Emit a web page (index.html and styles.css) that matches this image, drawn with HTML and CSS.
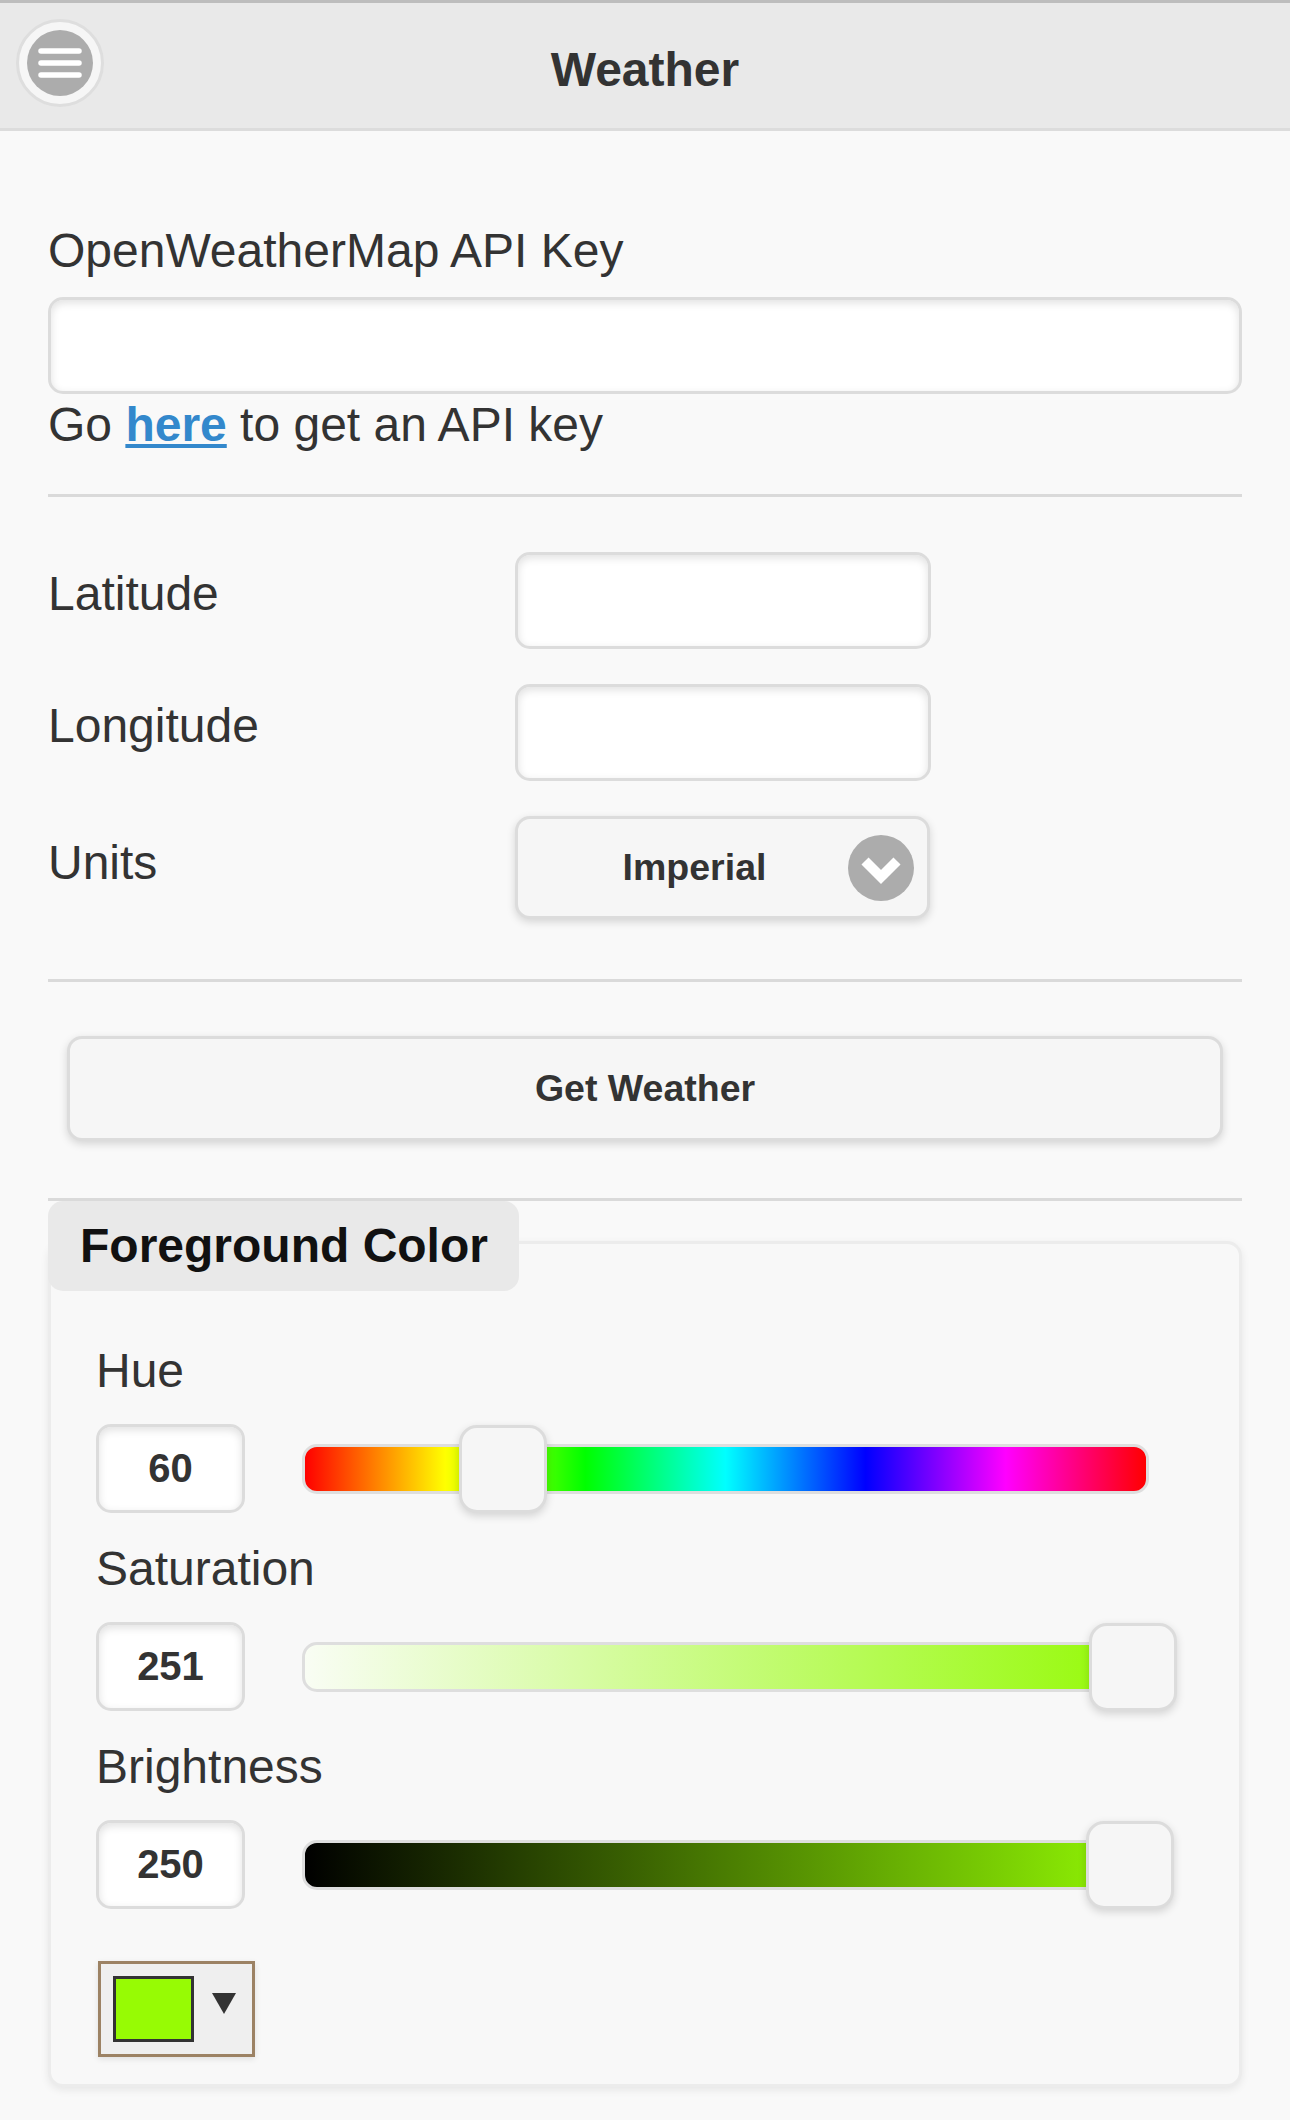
FILE: index.html
```html
<!DOCTYPE html>
<html lang="en">
<head>
<meta charset="utf-8">
<title>Weather</title>
<link rel="stylesheet" href="styles.css">
</head>
<body>
<header class="hdr">
  <div class="hdr-left">
    <button class="menu-btn" aria-label="Menu">
      <svg width="66" height="66" viewBox="0 0 66 66">
        <circle cx="33" cy="33" r="33" fill="#acacac"/>
        <g stroke="#fff" stroke-width="5.5" stroke-linecap="round">
          <line x1="14" y1="21" x2="52" y2="21"/>
          <line x1="14" y1="33" x2="52" y2="33"/>
          <line x1="14" y1="45" x2="52" y2="45"/>
        </g>
      </svg>
    </button>
  </div>
  <h1 class="title">Weather</h1>
  <div class="hdr-right"></div>
</header>

<main class="content">
  <section class="field api">
    <label class="lbl">OpenWeatherMap API Key</label>
    <div class="text-input"></div>
    <p class="hint">Go <a href="#">here</a> to get an API key</p>
  </section>

  <section class="field loc">
    <div class="row">
      <label class="lbl">Latitude</label>
      <div class="text-input half"></div>
    </div>
    <div class="row">
      <label class="lbl">Longitude</label>
      <div class="text-input half"></div>
    </div>
    <div class="row units">
      <label class="lbl">Units</label>
      <div class="select">
        <span class="select-text">Imperial</span>
        <svg class="select-icon" width="66" height="66" viewBox="0 0 66 66">
          <circle cx="33" cy="33" r="33" fill="#acacac"/>
          <polyline points="17,26 33,42 49,26" fill="none" stroke="#fff" stroke-width="10" stroke-linejoin="miter"/>
        </svg>
      </div>
    </div>
  </section>

  <section class="field action">
    <button class="btn">Get Weather</button>
  </section>

  <div class="colorbox">
    <div class="legend">Foreground Color</div>

    <label class="lbl slbl first">Hue</label>
    <div class="srow">
      <div class="val">60</div>
      <div class="track hue"><div class="thumb" style="left: calc(23.53% - 44px)"></div></div>
    </div>

    <label class="lbl slbl">Saturation</label>
    <div class="srow">
      <div class="val">251</div>
      <div class="track sat"><div class="thumb" style="left: calc(98.43% - 44px)"></div></div>
    </div>

    <label class="lbl slbl">Brightness</label>
    <div class="srow">
      <div class="val">250</div>
      <div class="track bri"><div class="thumb" style="left: calc(98.04% - 44px)"></div></div>
    </div>

    <div class="swatch-btn">
      <span class="swatch"></span>
      <span class="caret"></span>
    </div>
  </div>
</main>
</body>
</html>
```

FILE: styles.css
```css
* { box-sizing: border-box; }

html, body {
  margin: 0;
  padding: 0;
}

body {
  background: #f9f9f9;
  font-family: "Liberation Sans", Arial, Helvetica, sans-serif;
  color: #333;
  width: 1290px;
}

/* Header */
.hdr {
  height: 131px;
  border-top: 3px solid #bdbdbd;
  border-bottom: 3px solid #dcdcdc;
  background: #e9e9e9;
  display: grid;
  grid-template-columns: 130px 1fr 130px;
}

.hdr-left {
  padding: 16px 0 0 16px;
}

.menu-btn {
  width: 88px;
  height: 88px;
  border-radius: 50%;
  background: #f6f6f6;
  border: 3px solid #dedede;
  padding: 0;
  display: flex;
  align-items: center;
  justify-content: center;
}

.menu-btn svg { display: block; }

.title {
  margin: 0;
  align-self: center;
  text-align: center;
  font-size: 48px;
  font-weight: 700;
  line-height: 62px;
  padding-top: 8px;
  color: #333;
}

/* Content */
.content {
  padding: 0 48px 30px;
}

.field {
  border-bottom: 3px solid #dadada;
}

.lbl {
  display: block;
  font-size: 48px;
  line-height: 62px;
  color: #333;
}

.text-input {
  display: block;
  height: 97px;
  background: #fff;
  border: 3px solid #dcdcdc;
  border-radius: 15px;
  box-shadow: inset 0 3px 8px rgba(0, 0, 0, 0.12);
}

.api {
  padding: 89px 0 38px;
}

.api .text-input {
  margin-top: 15px;
}

.hint {
  margin: 0;
  font-size: 48px;
  line-height: 62px;
}

.hint a {
  color: #3388cc;
  font-weight: 700;
  text-decoration: underline;
}

/* Location rows */
.loc {
  padding: 55px 0 60px;
}

.row {
  display: flex;
  align-items: flex-start;
}

.row + .row {
  margin-top: 35px;
}

.row .lbl {
  width: 467px;
  margin-top: 11px;
}

.row .text-input.half {
  width: 416px;
}

.row.units .lbl {
  margin-top: 16px;
}

.select {
  position: relative;
  width: 415px;
  height: 103px;
  display: flex;
  align-items: center;
  justify-content: center;
  padding: 0 104px 0 48px;
  background: #f6f6f6;
  border: 3px solid #dcdcdc;
  border-radius: 15px;
  box-shadow: 0 3px 9px rgba(0, 0, 0, 0.15);
  font-size: 37.5px;
  font-weight: 700;
  color: #333;
}

.select-icon {
  position: absolute;
  right: 13px;
  top: 50%;
  margin-top: -33px;
}

/* Action */
.action {
  padding: 54px 19px 57px;
}

.btn {
  display: block;
  width: 100%;
  height: 105px;
  background: #f6f6f6;
  border: 3px solid #dcdcdc;
  border-radius: 15px;
  box-shadow: 0 3px 9px rgba(0, 0, 0, 0.15);
  font-family: "Liberation Sans", Arial, Helvetica, sans-serif;
  font-size: 37.5px;
  font-weight: 700;
  color: #333;
}

/* Color box */
.colorbox {
  margin-top: 40px;
  border: 3px solid #ececec;
  border-radius: 15px;
  background: #f8f8f8;
  box-shadow: 0 3px 8px rgba(0, 0, 0, 0.08);
  padding: 0 45px 27px;
}

.legend {
  width: fit-content;
  height: 90px;
  margin: -43px 0 0 -48px;
  padding: 0 31px 0 32px;
  line-height: 90px;
  background: #e9e9e9;
  border-radius: 15px;
  font-size: 48px;
  font-weight: 700;
  color: #111;
}

.slbl {
  margin-top: 25px;
}

.slbl.first {
  margin-top: 49px;
}

.srow {
  display: flex;
  align-items: center;
  margin-top: 22px;
}

.val {
  width: 149px;
  height: 89px;
  display: flex;
  align-items: center;
  justify-content: center;
  background: #fff;
  border: 3px solid #dcdcdc;
  border-radius: 15px;
  box-shadow: inset 0 3px 8px rgba(0, 0, 0, 0.12);
  font-size: 40px;
  font-weight: 700;
  color: #333;
}

.track {
  position: relative;
  width: 847px;
  height: 50px;
  margin-left: 57px;
  border: 3px solid #dedede;
  border-radius: 15px;
}

.track.hue {
  background: linear-gradient(to right,
    #ff0000 0%, #ffff00 16.67%, #00ff00 33.33%, #00ffff 50%,
    #0000ff 66.67%, #ff00ff 83.33%, #ff0000 100%);
}

.track.sat {
  background: linear-gradient(to right, #f9fdf4 0%, #94fa04 100%);
}

.track.bri {
  background: linear-gradient(to right, #000000 0%, #94fa04 100%);
}

.thumb {
  position: absolute;
  top: -22px;
  width: 88px;
  height: 88px;
  background: #f6f6f6;
  border: 3px solid #dcdcdc;
  border-radius: 18px;
  box-shadow: 0 3px 9px rgba(0, 0, 0, 0.15);
}

.swatch-btn {
  display: flex;
  align-items: flex-start;
  width: 157px;
  height: 96px;
  margin: 52px 0 0 2px;
  padding: 12px;
  background: #efefef;
  border: 3px solid #9c8264;
  box-shadow: 0 2px 6px rgba(0, 0, 0, 0.1);
}

.swatch {
  width: 81px;
  height: 66px;
  border: 3px solid #333;
  background: #97fb04;
}

.caret {
  width: 0;
  height: 0;
  margin: 17px 0 0 18px;
  border-left: 12px solid transparent;
  border-right: 12px solid transparent;
  border-top: 21px solid #333;
}
```
